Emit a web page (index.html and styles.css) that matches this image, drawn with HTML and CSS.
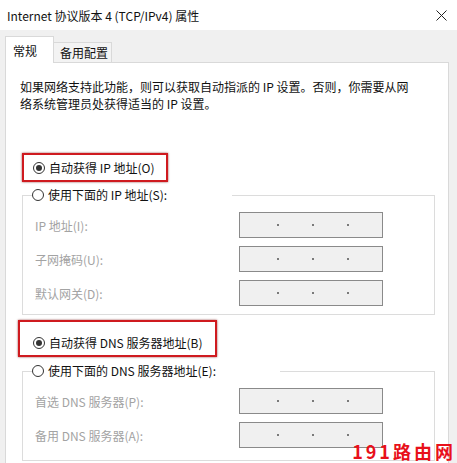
FILE: index.html
```html
<!DOCTYPE html>
<html lang="zh-CN">
<head>
    <meta charset="UTF-8">
    <title>Internet 协议版本 4 (TCP/IPv4) 属性</title>
    <link rel="stylesheet" href="styles.css">
</head>
<body>
    <div class="titlebar">
        <span class="title">Internet 协议版本 4 (TCP/IPv4) 属性</span>
        <svg class="close" width="11" height="11" viewBox="0 0 11 11">
            <path d="M0.5 0.5 L10.5 10.5 M10.5 0.5 L0.5 10.5" stroke="#222" stroke-width="1" fill="none"/>
        </svg>
    </div>

    <div class="tabs">
        <div class="tab active">常规</div>
        <div class="tab">备用配置</div>
    </div>

    <div class="panel">
        <p class="desc">如果网络支持此功能，则可以获取自动指派的 IP 设置。否则，你需要从网<br>络系统管理员处获得适当的 IP 设置。</p>

        <div class="pick pick-ip">
            <span class="radio checked"></span>自动获得 IP 地址(O)
        </div>

        <fieldset class="group">
            <legend class="legend-ip"><span class="radio"></span>使用下面的 IP 地址(S):</legend>
            <div class="row">
                <span class="label">IP 地址(I):</span>
                <div class="ipbox"><i></i><i></i><i></i></div>
            </div>
            <div class="row">
                <span class="label">子网掩码(U):</span>
                <div class="ipbox"><i></i><i></i><i></i></div>
            </div>
            <div class="row">
                <span class="label">默认网关(D):</span>
                <div class="ipbox"><i></i><i></i><i></i></div>
            </div>
        </fieldset>

        <div class="pick pick-dns">
            <span class="radio checked"></span>自动获得 DNS 服务器地址(B)
        </div>

        <fieldset class="group group-dns">
            <legend class="legend-dns"><span class="radio"></span>使用下面的 DNS 服务器地址(E):</legend>
            <div class="row">
                <span class="label">首选 DNS 服务器(P):</span>
                <div class="ipbox"><i></i><i></i><i></i></div>
            </div>
            <div class="row">
                <span class="label">备用 DNS 服务器(A):</span>
                <div class="ipbox"><i></i><i></i><i></i></div>
            </div>
        </fieldset>
    </div>

    <div class="watermark">191路由网</div>
</body>
</html>
```

FILE: styles.css
```css
body {
    margin: 0;
    width: 457px;
    height: 463px;
    overflow: hidden;
    position: relative;
    background-color: #f0f0f0;
    font-family: "Noto Sans CJK SC", "Noto Sans", sans-serif;
    font-size: 12px;
    color: #111;
}

.titlebar {
    height: 30px;
    background-color: #fff;
    display: flex;
    align-items: center;
    justify-content: space-between;
    padding: 0 10px 0 7px;
}

.title {
    color: #111;
}

.close {
    display: block;
}

.tabs {
    display: flex;
    align-items: flex-end;
    height: 32px;
    padding-left: 5px;
    position: relative;
    z-index: 1;
}

.tab {
    box-sizing: border-box;
    height: 20px;
    width: 58px;
    padding-left: 6px;
    line-height: 19px;
    background-color: #f3f3f3;
    border: 1px solid #d9d9d9;
    border-bottom: none;
    border-left: none;
}

.tab.active {
    height: 27px;
    width: 49px;
    padding-left: 7px;
    line-height: 28px;
    background-color: #fff;
    border-left: 1px solid #d9d9d9;
    margin-bottom: -1px;
}

.panel {
    margin-left: 5px;
    width: 444px;
    height: 401px;
    box-sizing: border-box;
    background-color: #fff;
    border: 1px solid #d9d9d9;
    border-bottom: none;
    padding: 15px 0 0 14px;
}

.desc {
    margin: 0;
    line-height: 17px;
    white-space: nowrap;
}

.radio {
    display: inline-block;
    box-sizing: border-box;
    width: 12px;
    height: 12px;
    border: 1px solid #333;
    border-radius: 50%;
    margin-right: 4px;
    position: relative;
    background-color: #fff;
    flex-shrink: 0;
}

.radio.checked::after {
    content: "";
    position: absolute;
    left: 2px;
    top: 2px;
    width: 6px;
    height: 6px;
    border-radius: 50%;
    background-color: #333;
}

.pick {
    box-sizing: border-box;
    display: flex;
    align-items: center;
    border: 2px solid #cf1a1f;
    box-shadow: 0 0 2px rgba(110, 0, 0, 0.7);
}

.pick-ip {
    margin: 41px 0 0 2px;
    width: 146px;
    height: 29px;
    padding-left: 9px;
}

.pick-dns {
    margin: 5px 0 0 -2px;
    width: 199px;
    height: 37px;
    padding: 8px 0 0 13px;
}

.group {
    box-sizing: border-box;
    width: 413px;
    margin: 5px 0 0 2px;
    border: 1px solid #dcdcdc;
    padding: 0 0 8px 12px;
}

.group-dns {
    margin-top: 6px;
    height: 98px;
}

.group legend {
    display: flex;
    align-items: center;
    height: 16px;
    padding: 0;
    margin-left: -3px;
    line-height: 16px;
}

.legend-ip {
    width: 200px;
}

.legend-dns {
    width: 248px;
}

.row {
    display: flex;
    align-items: center;
    height: 26px;
    margin-top: 8px;
}

.group .row:first-of-type {
    margin-top: 9px;
}

.label {
    width: 204px;
    color: #a3a3a3;
}

.ipbox {
    box-sizing: border-box;
    width: 144px;
    height: 26px;
    background-color: #f0f0f0;
    border: 1px solid #8a8a8a;
    display: flex;
    align-items: center;
    gap: 33px;
    padding-left: 37px;
}

.ipbox i {
    display: block;
    width: 2px;
    height: 2px;
    background-color: #7a7a7a;
}

.watermark {
    position: absolute;
    right: 1px;
    bottom: 1px;
    font-family: "Noto Sans CJK SC", sans-serif;
    font-size: 18px;
    font-weight: bold;
    letter-spacing: 3px;
    line-height: 22px;
    color: #e8101a;
}
```
